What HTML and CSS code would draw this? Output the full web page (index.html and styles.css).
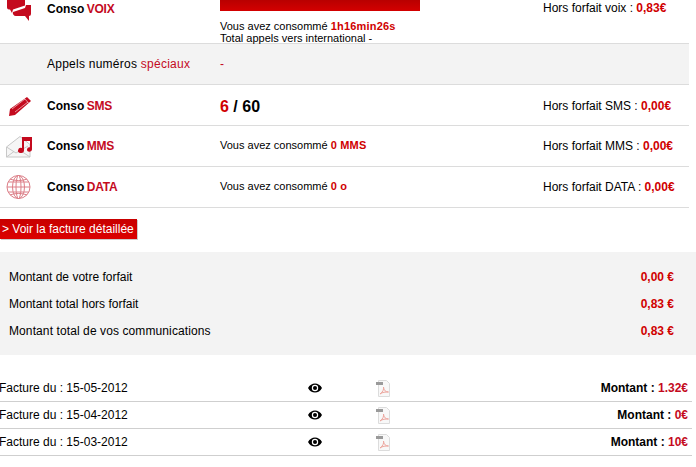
FILE: index.html
```html
<!DOCTYPE html>
<html>
<head>
	<title>Ma consommation</title>
	<link rel="stylesheet" href="styles.css">
</head>
<body>
	<div class="conso">
		<div class="row first">
			<svg class="icon" width="36" height="24" viewBox="0 0 36 24"><path fill="#c40a1e" d="M7-2h18v7.500L13 9.500 12 13l-2-3.500H9a2 2 0 0 1-2-2z"/><path fill="#c40a1e" d="M13 12l12-4 1-3h5v9a2 2 0 0 1-2 2v5l-4-5H16a3 3 0 0 1-3-4z"/></svg>
			<div class="label"><b>Conso <em>VOIX</em></b></div>
			<div class="detail">
				<div class="bar"></div>
				<p>Vous avez consommé <strong>1h16min26s</strong></p>
				<p>Total appels vers international -</p>
			</div>
			<div class="extra">Hors forfait voix : <strong>0,83€</strong></div>
		</div>
		<div class="row grey">
			<div class="icon"></div>
			<div class="label">Appels numéros <em>spéciaux</em></div>
			<div class="detail"><em>-</em></div>
			<div class="extra"></div>
		</div>
		<div class="row sms">
			<svg class="icon" width="36" height="24" viewBox="0 0 36 24"><path fill="#c40a1e" d="M9 23l1-7L27 4l4 4-16 14z"/><path fill="none" stroke="#fff" stroke-opacity=".7" stroke-width=".8" d="M12 16l13-10M15 19l13-10M24.500 5.500l4 4.500"/></svg>
			<div class="label"><b>Conso <em>SMS</em></b></div>
			<div class="detail big"><strong>6</strong> / 60</div>
			<div class="extra">Hors forfait SMS : <strong>0,00€</strong></div>
		</div>
		<div class="row">
			<svg class="icon" width="36" height="24" viewBox="0 0 36 24"><path fill="#f6f6f6" stroke="#c8c8c8" d="M6.500 13L20 2.500l10 8v12.500H6.500z"/><path fill="none" stroke="#c8c8c8" d="M6.500 13L16 19l12-7M6.500 23L14 17.500M30 23l-9-6"/><path fill="#c40a1e" d="M22 3h10v12.500a2.500 2.200 0 1 1-2-2.200V7h-6v9.500a3 2.500 0 1 1-2-2.400z"/></svg>
			<div class="label"><b>Conso <em>MMS</em></b></div>
			<div class="detail small">Vous avez consommé <strong>0 MMS</strong></div>
			<div class="extra">Hors forfait MMS : <strong>0,00€</strong></div>
		</div>
		<div class="row">
			<svg class="icon" width="36" height="24" viewBox="0 0 36 24"><g fill="none" stroke="#dc7f88"><circle cx="18.500" cy="12" r="11.500"/><ellipse cx="18.500" cy="12" rx="6" ry="11.500"/><ellipse cx="18.500" cy="12" rx="2.500" ry="11.500"/><path d="M7 12h23M8 7h21M8 17h21M10 4c5 2 12 2 17 0M10 20c5-2 12-2 17 0"/></g></svg>
			<div class="label"><b>Conso <em>DATA</em></b></div>
			<div class="detail small">Vous avez consommé <strong>0 o</strong></div>
			<div class="extra">Hors forfait DATA : <strong>0,00€</strong></div>
		</div>
	</div>

	<a class="btn" href="#">&gt; Voir la facture détaillée</a>

	<div class="totals">
		<div class="total"><span>Montant de votre forfait</span><strong>0,00 €</strong></div>
		<div class="total"><span>Montant total hors forfait</span><strong>0,83 €</strong></div>
		<div class="total"><span>Montant total de vos communications</span><strong>0,83 €</strong></div>
	</div>

	<div class="bills">
		<div class="bill">
			<span class="date">Facture du : 15-05-2012</span>
			<svg class="eye" width="14" height="10" viewBox="0 0 14 10"><path d="M0 5c3-6 11-6 14 0-3 6-11 6-14 0z"/><circle cx="7" cy="5" r="3.200" fill="#fff"/><circle cx="7" cy="5" r="2"/></svg>
			<svg class="pdf" width="14" height="17" viewBox="0 0 14 17"><path fill="#f8f8f8" stroke="#dcdcdc" d="M2.500.5h8l3 3v13h-11z"/><rect x="0" y="2" width="7" height="3" fill="#9a9a9a"/><path fill="none" stroke="#eda59d" d="M4 14c3-2 4-5 3.500-7 0 3 2 5 5 5-3 0-6 0-8.500 2"/></svg>
			<span class="amount">Montant : <em>1.32€</em></span>
		</div>
		<div class="bill">
			<span class="date">Facture du : 15-04-2012</span>
			<svg class="eye" width="14" height="10" viewBox="0 0 14 10"><path d="M0 5c3-6 11-6 14 0-3 6-11 6-14 0z"/><circle cx="7" cy="5" r="3.200" fill="#fff"/><circle cx="7" cy="5" r="2"/></svg>
			<svg class="pdf" width="14" height="17" viewBox="0 0 14 17"><path fill="#f8f8f8" stroke="#dcdcdc" d="M2.500.5h8l3 3v13h-11z"/><rect x="0" y="2" width="7" height="3" fill="#9a9a9a"/><path fill="none" stroke="#eda59d" d="M4 14c3-2 4-5 3.500-7 0 3 2 5 5 5-3 0-6 0-8.500 2"/></svg>
			<span class="amount">Montant : <em>0€</em></span>
		</div>
		<div class="bill">
			<span class="date">Facture du : 15-03-2012</span>
			<svg class="eye" width="14" height="10" viewBox="0 0 14 10"><path d="M0 5c3-6 11-6 14 0-3 6-11 6-14 0z"/><circle cx="7" cy="5" r="3.200" fill="#fff"/><circle cx="7" cy="5" r="2"/></svg>
			<svg class="pdf" width="14" height="17" viewBox="0 0 14 17"><path fill="#f8f8f8" stroke="#dcdcdc" d="M2.500.5h8l3 3v13h-11z"/><rect x="0" y="2" width="7" height="3" fill="#9a9a9a"/><path fill="none" stroke="#eda59d" d="M4 14c3-2 4-5 3.500-7 0 3 2 5 5 5-3 0-6 0-8.500 2"/></svg>
			<span class="amount">Montant : <em>10€</em></span>
		</div>
	</div>
</body>
</html>
```
FILE: styles.css
```css
html, body{
	margin:0;
	padding:0;
	height:467px;
	overflow:hidden;
	background:#fff;
}

body{
	font:12px "Liberation Sans", Arial, sans-serif;
	color:#000;
}

em{
	font-style:normal;
	color:#c40a1e;
}

strong{
	color:#d00000;
}

p{
	margin:0;
}

.conso{
	width:689px;
}

.row{
	display:grid;
	grid-template-columns:47px 173px 323px 1fr;
	align-items:center;
	height:40px;
	border-bottom:1px solid #dcdcdc;
}

.row.first{
	height:43px;
	align-items:start;
}

.row.grey{
	background:#f3f3f3;
}

.row.grey .label{
	letter-spacing:.25px;
}

.label b{
	word-spacing:-1px;
}

.label b em{
	letter-spacing:-.2px;
}

.first .label{
	padding-top:2px;
}

.first .extra{
	padding-top:1px;
}

.sms .label, .sms .extra{
	padding-top:1px;
}

.bar{
	width:200px;
	height:11px;
	margin-bottom:9px;
	background:linear-gradient(#b80000, #d40000);
}

.detail p{
	font-size:11px;
	line-height:12px;
}

.detail strong{
	letter-spacing:.2px;
}

.small{
	padding-bottom:2px;
	font-size:11px;
}

.big{
	padding-top:3px;
	font-size:16px;
	font-weight:bold;
}

.big strong{
	letter-spacing:0;
}

.btn{
	display:inline-block;
	margin-top:11px;
	padding:0 3px 0 2px;
	height:20px;
	line-height:21px;
	background:linear-gradient(#c80000, #dc0000);
	box-shadow:1px 1px 0 #ccc;
	color:#fff;
	text-decoration:none;
	vertical-align:top;
}

.totals{
	margin-top:13px;
	padding:12px 9px 10px;
	background:#f3f3f3;
}

.total{
	display:flex;
	justify-content:space-between;
	height:27px;
	line-height:27px;
	padding-right:13px;
}

.total:last-child span{
	letter-spacing:.1px;
}

.bills{
	margin-top:20px;
}

.bill{
	display:grid;
	grid-template-columns:308px 68px 14px 1fr;
	align-items:center;
	height:26px;
	margin-right:4px;
	border-bottom:1px solid #cfcfcf;
}

.date{
	margin-left:-1px;
}

.amount{
	text-align:right;
	font-weight:bold;
	padding-right:4px;
}

.amount em{
	color:#c40a1e;
}
```
